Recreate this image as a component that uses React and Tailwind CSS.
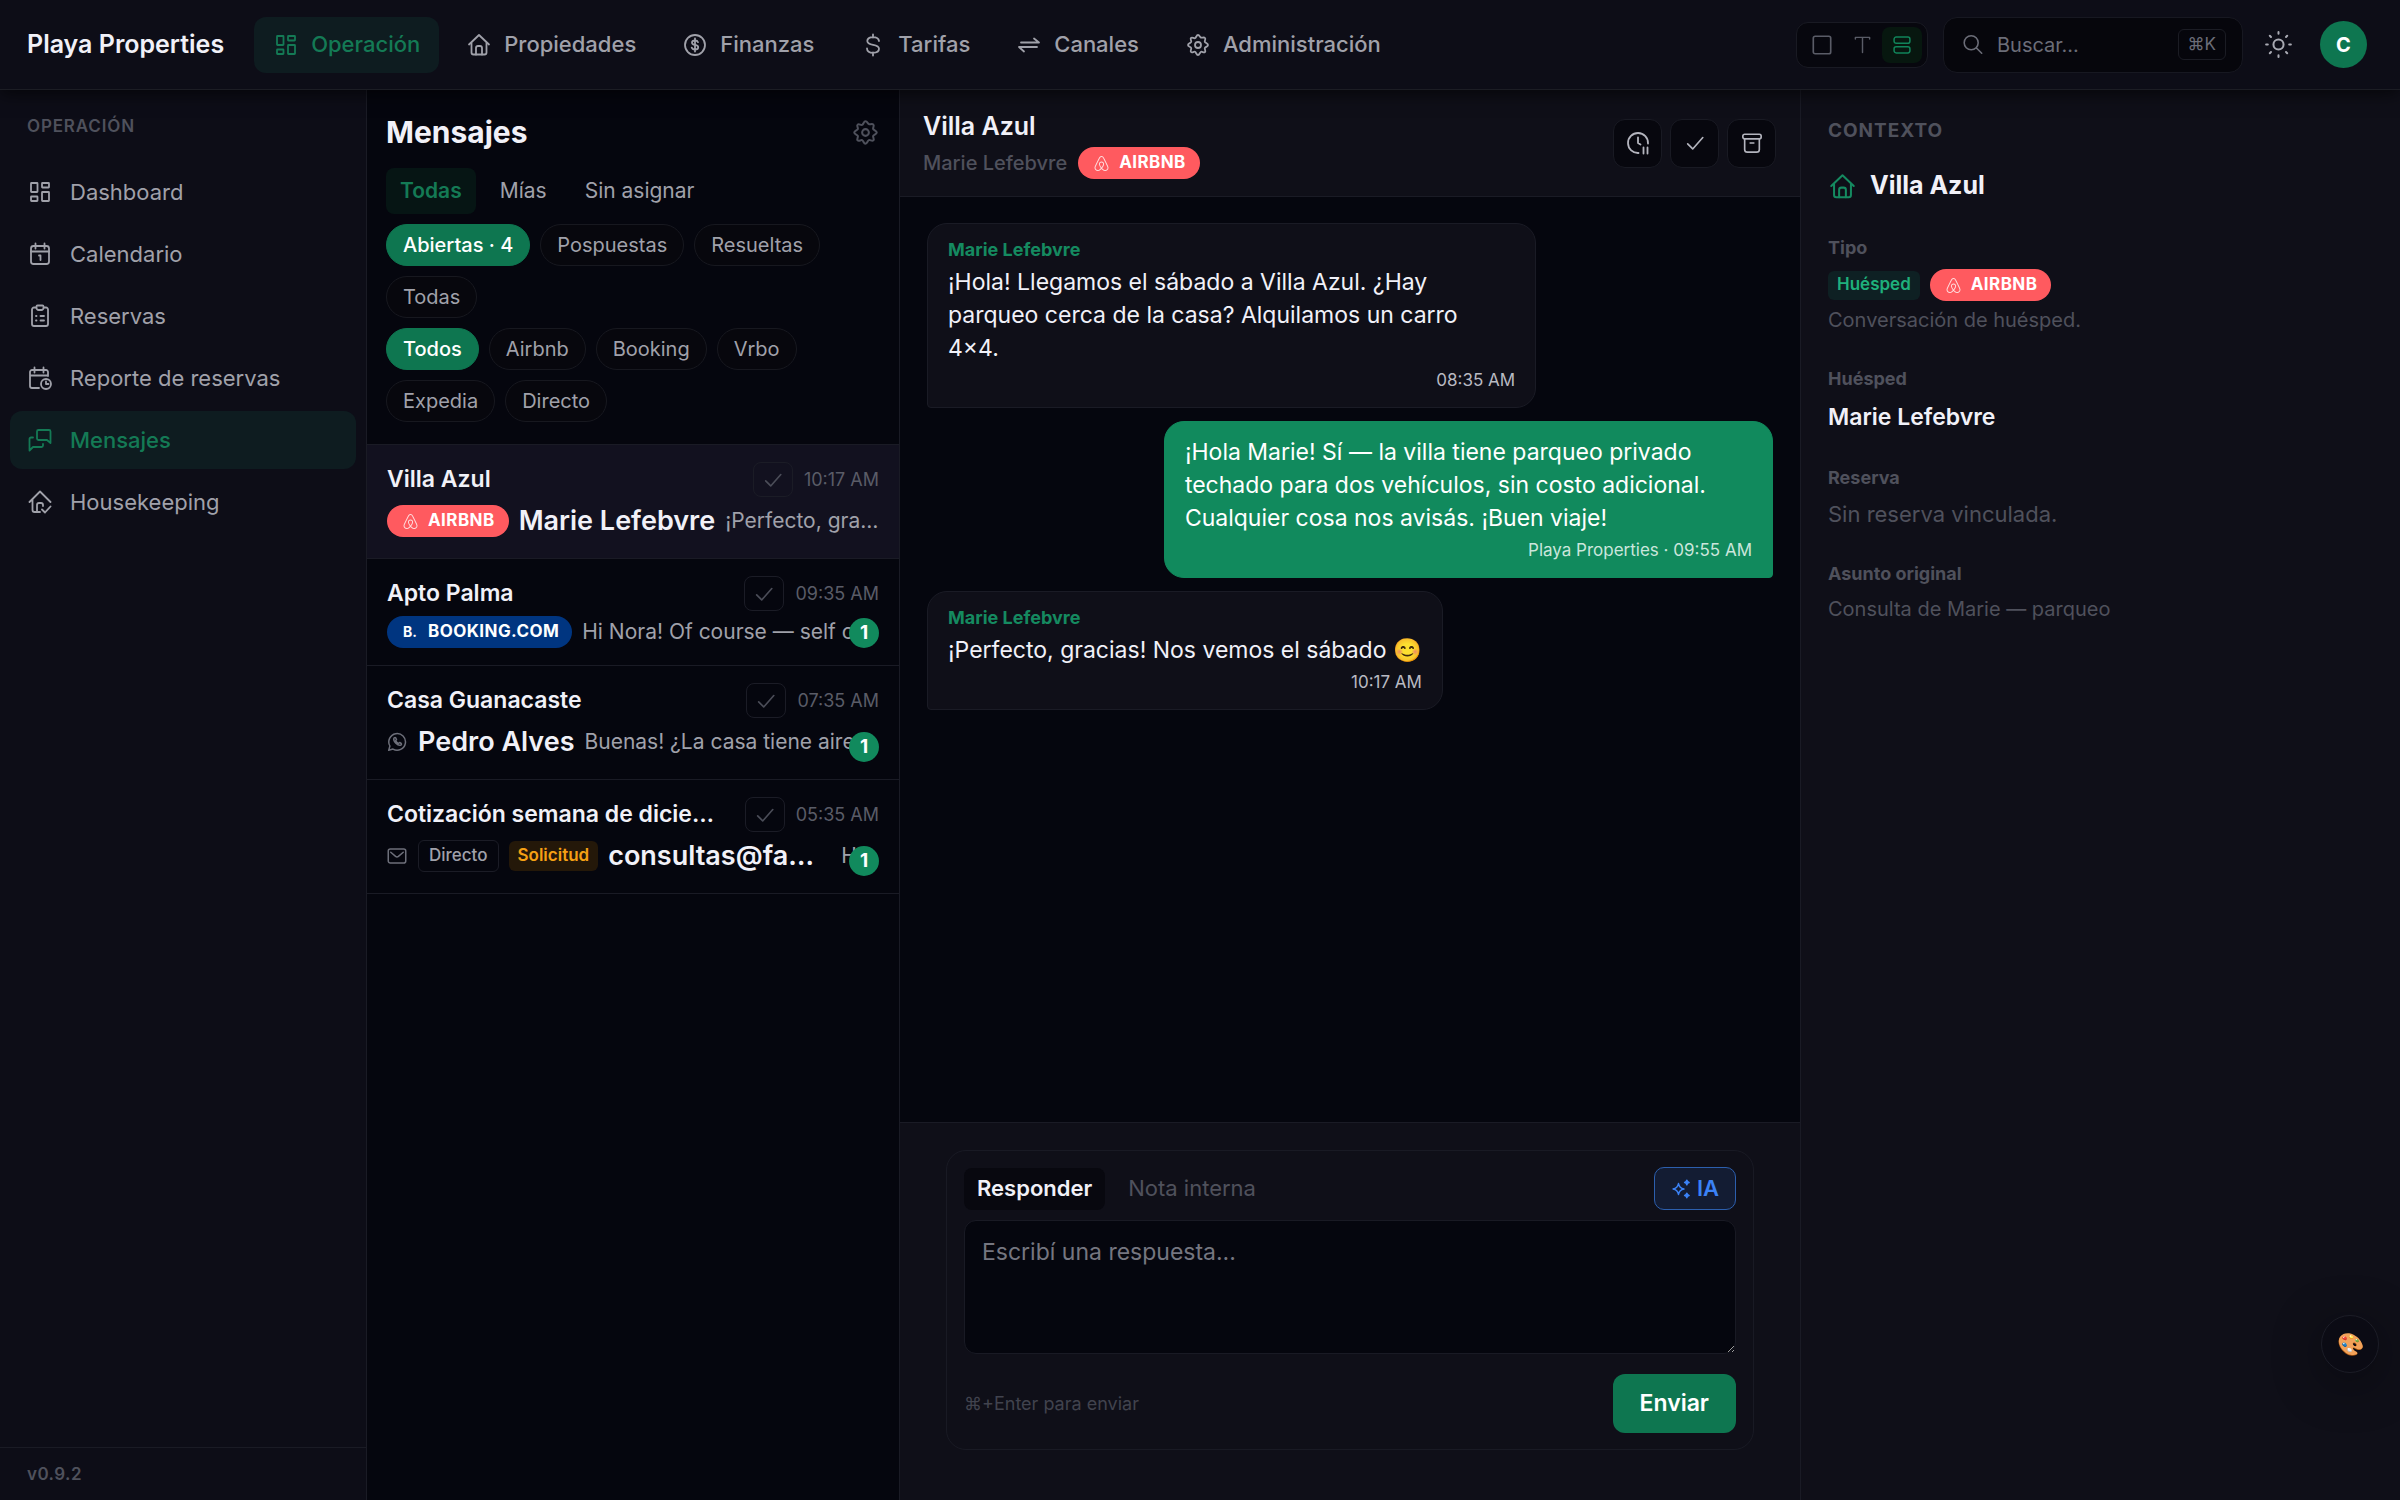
import { useState } from 'react';
import { SiAirbnb } from 'react-icons/si';

const ICONS = {
  dashboard: (
    <>
      <rect x="3" y="3" width="6.5" height="9" rx="0.5" />
      <rect x="14" y="3" width="7" height="4.5" rx="0.5" />
      <rect x="3" y="16.5" width="6.5" height="4.5" rx="0.5" />
      <rect x="14" y="12" width="7" height="9" rx="0.5" />
    </>
  ),
  home: (
    <>
      <path d="M2 11.500 12 2l10 9.500" />
      <path d="M4.500 10v9.500a2 2 0 0 0 2 2h11a2 2 0 0 0 2-2V10" />
      <path d="M9 21.500V15a2 2 0 0 1 2-2h2a2 2 0 0 1 2 2v6.500" />
    </>
  ),
  coin: (
    <>
      <circle cx="12" cy="12" r="10" />
      <path d="M15 9.200C14.600 8 13.500 7.500 12 7.500c-1.800 0-3 .8-3 2.200 0 3.200 6.200 1.400 6.200 4.500 0 1.500-1.300 2.300-3.200 2.300-1.700 0-2.900-.6-3.300-1.900M12 5.500v13" />
    </>
  ),
  dollar: <path d="M18 8c-.4-2.500-2.600-3.800-6-3.800S6.300 5.500 6.300 8c0 5.500 11.700 2.200 11.700 7.800 0 2.600-2.400 4-6 4s-6-1.500-6-4.300M12 1.500v3M12 19.500v3" />,
  swap: <path d="M4 9.500h18l-5-4M20 14H2l5 4.500" />,
  gear: (
    <>
      <path d="M12 2c1.600 0 1.900 2.100 3 2.600s2.900-.8 4 .4-.7 2.800-.2 3.900S22 10.400 22 12s-2.700 1.900-3.200 3 1.400 2.900.2 4-2.800-.7-4-.2S13.600 22 12 22s-1.900-2.700-3-3.200-2.900 1.400-4 .2.700-2.800.2-4S2 13.600 2 12s2.700-1.900 3.200-3S3.800 6.100 5 5s2.800.7 4 .2S10.400 2 12 2Z" />
      <circle cx="12" cy="12" r="3" />
    </>
  ),
  calendar: (
    <>
      <rect x="3" y="4" width="18" height="18" rx="2.5" />
      <path d="M3 9.500h18M7.500 1.500v5M16.500 1.500v5M11 13.500h1.500V18" />
    </>
  ),
  clipboard: (
    <>
      <path d="M8 3.500H6a2 2 0 0 0-2 2V20a2 2 0 0 0 2 2h12a2 2 0 0 0 2-2V5.500a2 2 0 0 0-2-2h-2" />
      <path d="M8.500 2.500c0-.6.500-1 1-1h5c.600 0 1 .4 1 1V4c0 1.100-.9 2-2 2h-3a2 2 0 0 1-2-2zM8 12h.5M12.500 12H16M8 16.500h.5M12.500 16.500H16" />
    </>
  ),
  report: (
    <>
      <path d="M20 10V6a2 2 0 0 0-2-2H4a2 2 0 0 0-2 2v14a2 2 0 0 0 2 2h7M2 9.500h18M6.500 1.500v5M15.500 1.500v5" />
      <circle cx="18" cy="18" r="5" />
      <path d="M18 15.500V18h2.500" />
    </>
  ),
  chats: (
    <>
      <path d="M10.500 2H21a1.500 1.500 0 0 1 1.500 1.500V15L19 12h-8.500A1.500 1.500 0 0 1 9 10.500v-7A1.500 1.500 0 0 1 10.500 2Z" />
      <path d="M5 9.500H3A1.500 1.500 0 0 0 1.500 11v11.500L5 19h8.500a1.500 1.500 0 0 0 1.500-1.500V16" />
    </>
  ),
  housekeeping: (
    <>
      <path d="M1.500 12 12 1.500 22.500 12M4.500 9.500V20a2 2 0 0 0 2 2H12" />
      <path d="M9 22v-7a2 2 0 0 1 2-2h2a2 2 0 0 1 2 2v1M14 19.500l3 3 5.500-6" />
    </>
  ),
  search: (
    <>
      <circle cx="10.500" cy="10" r="8" />
      <path d="m16.500 16 6 6" />
    </>
  ),
  sun: (
    <>
      <circle cx="12" cy="12" r="4.500" />
      <path d="M12 1v1.500M12 21.500V23M1 12h1.500M21.500 12H23M4.300 4.300l1 1M18.700 18.700l1 1M4.300 19.700l1-1M18.700 5.300l1-1" />
    </>
  ),
  check: <path d="m4 13 5.500 5.500L20.500 6" />,
  snooze: (
    <>
      <path d="M12.500 22A10 10 0 1 1 22 12.500M12 6.500V12l2.500 1.500" />
      <path d="M17.500 16.500v6M21.500 16.500v6" />
    </>
  ),
  archive: (
    <>
      <rect x="2" y="2.500" width="20" height="5" rx="2" />
      <path d="M4 7.500V19a3 3 0 0 0 3 3h10a3 3 0 0 0 3-3V7.500M10 12h4" />
    </>
  ),
  whatsapp: (
    <>
      <path d="M2 22l1.500-5.200A10 10 0 1 1 7.200 20.500Z" />
      <path d="M8.300 7.500c-1.200 3.600 4.600 9.500 8.300 8.200.8-.4 1-1.500.5-1.900l-1.900-1.200-1.400 1.200c-1.400-.5-2.800-2-3.400-3.500l1-1.300-1-2c-.5-.5-1.700-.3-2.100.5Z" />
    </>
  ),
  mail: (
    <>
      <rect x="1.500" y="3.500" width="21" height="17" rx="2.500" />
      <path d="m4.500 7.500 5.800 5a2.700 2.700 0 0 0 3.400 0l5.800-5" />
    </>
  ),
  sparkles: (
    <>
      <path d="M9 5.500c.8 4 2.500 5.700 6.500 6.500-4 .8-5.700 2.500-6.500 6.500-.8-4-2.500-5.700-6.500-6.500 4-.8 5.700-2.500 6.500-6.500Z" />
      <path d="M19 1.500c.3 1.700 1 2.400 2.700 2.700-1.700.3-2.400 1-2.700 2.700-.3-1.700-1-2.400-2.700-2.700 1.700-.3 2.400-1 2.700-2.700ZM19 17c.3 1.700 1 2.400 2.700 2.700-1.700.3-2.400 1-2.700 2.700-.3-1.700-1-2.400-2.700-2.700 1.700-.3 2.400-1 2.700-2.700Z" fill="currentColor" />
    </>
  ),
  square: <rect x="2.500" y="2.500" width="19" height="19" rx="2" />,
  letter: <path d="M3 5V3h18v2M12 3v19" />,
  rows: (
    <>
      <rect x="2.500" y="2.500" width="19" height="7.500" rx="2.500" />
      <rect x="2.500" y="14" width="19" height="7.500" rx="2.500" />
    </>
  ),
};

function Icon({ name, className = 'size-6' }) {
  return (
    <svg viewBox="0 0 24 24" fill="none" stroke="currentColor" strokeWidth="1.8" strokeLinecap="round" strokeLinejoin="round" className={`shrink-0 ${className}`} aria-hidden="true">
      {ICONS[name]}
    </svg>
  );
}

const NAV = [
  { label: 'Operación', icon: 'dashboard', active: true },
  { label: 'Propiedades', icon: 'home' },
  { label: 'Finanzas', icon: 'coin' },
  { label: 'Tarifas', icon: 'dollar' },
  { label: 'Canales', icon: 'swap' },
  { label: 'Administración', icon: 'gear' },
];

const SIDEBAR = [
  { label: 'Dashboard', icon: 'dashboard' },
  { label: 'Calendario', icon: 'calendar' },
  { label: 'Reservas', icon: 'clipboard' },
  { label: 'Reporte de reservas', icon: 'report' },
  { label: 'Mensajes', icon: 'chats', active: true },
  { label: 'Housekeeping', icon: 'housekeeping' },
];

const CONVERSATIONS = [
  { title: 'Villa Azul', time: '10:17 AM', channel: 'airbnb', name: 'Marie Lefebvre', preview: '¡Perfecto, gracias! Nos vemos el sábado 😊', selected: true },
  { title: 'Apto Palma', time: '09:35 AM', channel: 'booking', preview: 'Hi Nora! Of course — self check-in', unread: 1 },
  { title: 'Casa Guanacaste', time: '07:35 AM', channel: 'whatsapp', name: 'Pedro Alves', preview: 'Buenas! ¿La casa tiene aire acondicionado?', unread: 1 },
  { title: 'Cotización semana de diciembre', time: '05:35 AM', channel: 'mail', name: 'consultas@familiamora.com', preview: 'Hola', unread: 1 },
];

const MESSAGES = [
  { from: 'Marie Lefebvre', text: '¡Hola! Llegamos el sábado a Villa Azul. ¿Hay parqueo cerca de la casa? Alquilamos un carro\n4×4.', meta: '08:35 AM' },
  { own: true, text: '¡Hola Marie! Sí — la villa tiene parqueo privado techado para dos vehículos, sin costo adicional. Cualquier cosa nos avisás. ¡Buen viaje!', meta: 'Playa Properties · 09:55 AM' },
  { from: 'Marie Lefebvre', text: '¡Perfecto, gracias! Nos vemos el sábado 😊', meta: '10:17 AM' },
];

function AirbnbPill() {
  return (
    <span className="flex h-8 shrink-0 items-center gap-[10px] rounded-full bg-[#ff5a5f] pr-[14px] pl-4 text-[17px] font-bold tracking-wide text-white">
      <SiAirbnb className="size-[15px] opacity-80" aria-hidden="true" />
      AIRBNB
    </span>
  );
}

function BookingPill() {
  return (
    <span className="flex h-8 shrink-0 items-center gap-[11px] rounded-full bg-[#003580] pr-[13px] pl-4 text-[17px] font-bold tracking-wide text-white">
      <span className="text-[14px] tracking-normal">B.</span>
      BOOKING.COM
    </span>
  );
}

function Pills({ items, value, onChange }) {
  return (
    <div className="flex flex-wrap gap-[10px]">
      {items.map((item) => (
        <button
          key={item}
          type="button"
          onClick={() => onChange(item)}
          className={`h-[42px] rounded-full border px-4 text-[20px] ${item === value ? 'border-[#0e7650] bg-[#0e7650] font-medium text-white' : 'border-[#17181f] bg-[#07070d] text-[#a0a1aa]'}`}
        >
          {item}
        </button>
      ))}
    </div>
  );
}

function Conversation({ item }) {
  return (
    <li className={`relative border-b border-[#1a1b25] px-5 pt-[17px] pb-4 ${item.selected ? 'bg-[#12111f]' : ''}`}>
      <div className="flex h-[35px] items-center gap-[11px]">
        <a href="#" className="min-w-0 flex-1 truncate text-[23px] font-semibold">{item.title}</a>
        <button type="button" aria-label="Resolver" className="flex h-[35px] w-10 items-center justify-center rounded-lg border border-[#1b1c26] text-[#4b4d58]">
          <Icon name="check" className="size-[22px]" />
        </button>
        <time className="text-[18px] text-[#5a5c67]">{item.time}</time>
      </div>
      <div className={`mt-[3px] flex items-center gap-[10px] overflow-hidden ${item.name ? 'h-[42px]' : 'h-[35px]'}`}>
        {item.channel === 'airbnb' && <AirbnbPill />}
        {item.channel === 'booking' && <BookingPill />}
        {item.channel === 'whatsapp' && <Icon name="whatsapp" className="mr-px size-5 text-[#6d6f7a]" />}
        {item.channel === 'mail' && (
          <>
            <Icon name="mail" className="mr-px size-5 text-[#6d6f7a]" />
            <span className="flex h-8 shrink-0 items-center rounded-md border border-[#1b1c26] px-[10px] text-[17px] font-medium text-[#a0a1aa]">Directo</span>
            <span className="flex h-[30px] shrink-0 items-center rounded-md bg-[#241809] px-[9px] text-[17px] font-semibold text-[#f5a014]">Solicitud</span>
          </>
        )}
        {item.name && <span className="max-w-[223px] shrink-0 truncate text-[27px] font-semibold">{item.name}</span>}
        <span className="min-w-0 flex-1 truncate text-[21px] text-[#a0a1aa]">{item.preview}</span>
      </div>
      {item.unread && (
        <span className="absolute right-5 bottom-[17px] flex size-[30px] items-center justify-center rounded-full bg-[#118a5d] text-[19px] font-bold text-white">{item.unread}</span>
      )}
    </li>
  );
}

function Message({ message }) {
  return (
    <article
      className={`max-w-[72%] rounded-[20px] border px-5 py-3 ${message.own ? 'self-end rounded-br-[4px] border-[#118a5d] bg-[#118a5d] text-white' : 'self-start rounded-bl-[4px] border-[#1a1b25] bg-[#0f0f18]'}`}
    >
      {message.from && <h3 className="text-[18px] leading-[28px] font-bold text-[#158a60]">{message.from}</h3>}
      <p className="mt-[2px] text-[23px] leading-[33px] whitespace-pre-line">{message.text}</p>
      <p className={`text-right text-[17px] leading-[30px] ${message.own ? 'text-[#cbe6dc]' : 'text-[#b9bac2]'}`}>{message.meta}</p>
    </article>
  );
}

function ContextSection({ label, children }) {
  return (
    <section>
      <h3 className="text-[18px] leading-[26px] font-bold text-[#4f515c]">{label}</h3>
      {children}
    </section>
  );
}

export default function App() {
  const [tab, setTab] = useState('Todas');
  const [status, setStatus] = useState('Abiertas · 4');
  const [channel, setChannel] = useState('Todos');
  const [reply, setReply] = useState('');

  return (
    <div className="flex h-screen flex-col bg-[#05060e] font-['Inter',sans-serif] text-[#f1f1f8]">
      {/* TOP BAR */}
      <header className="relative z-10 flex h-[90px] shrink-0 items-center border-b border-[#1c1d24] bg-[#0d0d17] pr-[33px] pl-[27px] shadow-[0_4px_16px_rgba(0,0,0,0.6)]">
        <span className="mr-[30px] text-[25px] font-semibold whitespace-nowrap">Playa Properties</span>
        <nav className="flex gap-2">
          {NAV.map((item) => (
            <a
              key={item.label}
              href="#"
              className={`flex h-14 items-center gap-[13px] rounded-xl pr-[19px] pl-5 text-[22px] font-medium ${item.active ? 'bg-[#0e1c20] text-[#147a55]' : 'text-[#a0a1aa]'}`}
            >
              <Icon name={item.icon} />
              {item.label}
            </a>
          ))}
        </nav>
        <div className="ml-auto flex items-center">
          <div className="mr-[15px] flex h-[46px] items-center rounded-xl border border-[#191a23] bg-[#07070e] px-[5px] text-[#5a5c67]">
            <button type="button" aria-label="Compacto" className="flex h-9 w-10 items-center justify-center"><Icon name="square" className="size-[22px]" /></button>
            <button type="button" aria-label="Texto" className="flex h-9 w-10 items-center justify-center"><Icon name="letter" className="size-[19px]" /></button>
            <button type="button" aria-label="Filas" className="flex h-9 w-10 items-center justify-center rounded-lg bg-[#07170f] text-[#11845a]"><Icon name="rows" className="size-5" /></button>
          </div>
          <div className="mr-[22px] flex h-14 w-[300px] items-center rounded-[14px] border border-[#171821] bg-[#06060c] pr-4 pl-[18px] text-[#6b6d78]">
            <Icon name="search" className="size-[21px]" />
            <input type="search" aria-label="Buscar" placeholder="Buscar..." className="ml-[14px] w-0 flex-1 bg-transparent text-[20px] outline-none placeholder:text-[#6b6d78]" />
            <kbd className="flex h-[31px] items-center rounded-md border border-[#1b1c24] px-[9px] font-['Inter',sans-serif] text-[17px]">⌘K</kbd>
          </div>
          <button type="button" aria-label="Cambiar tema" className="mr-7 text-[#a9aab3]"><Icon name="sun" className="size-[27px]" /></button>
          <button type="button" className="size-[47px] rounded-full bg-[#0e7650] text-[20px] font-bold text-white">C</button>
        </div>
      </header>

      <div className="flex min-h-0 flex-1">
        {/* SIDEBAR */}
        <aside className="flex w-[367px] shrink-0 flex-col border-r border-[#1a1b25] bg-[#0d0d17]">
          <h2 className="px-[27px] pt-[23px] text-[17px] leading-[26px] font-semibold tracking-wider text-[#4f515c]">OPERACIÓN</h2>
          <nav className="mt-6 flex flex-col gap-1 px-[10px]">
            {SIDEBAR.map((item) => (
              <a
                key={item.label}
                href="#"
                className={`flex h-[58px] items-center gap-[18px] rounded-xl px-[18px] text-[22px] ${item.active ? 'bg-[#0e1c20] font-medium text-[#147a55]' : 'text-[#a0a1aa]'}`}
              >
                <Icon name={item.icon} />
                {item.label}
              </a>
            ))}
          </nav>
          <p className="mt-auto border-t border-[#1a1b25] px-[27px] py-3 text-[17px] leading-[28px] font-semibold tracking-wide text-[#4f515c]">v0.9.2</p>
        </aside>

        {/* CONVERSATION LIST */}
        <section className="w-[533px] shrink-0 overflow-hidden border-r border-[#1a1b25]">
          <div className="border-b border-[#1a1b25] px-[19px] pt-5 pb-[22px]">
            <div className="flex h-11 items-center justify-between">
              <h1 className="text-[30px] font-bold">Mensajes</h1>
              <button type="button" aria-label="Ajustes" className="mr-px text-[#4f515c]"><Icon name="gear" className="size-[27px]" /></button>
            </div>
            <div className="mt-[14px] mb-[10px] flex gap-[10px]">
              {['Todas', 'Mías', 'Sin asignar'].map((label) => (
                <button
                  key={label}
                  type="button"
                  onClick={() => setTab(label)}
                  className={`h-[46px] rounded-lg px-[14px] text-[21px] ${tab === label ? 'bg-[#061514] font-semibold text-[#147a55]' : 'text-[#a0a1aa]'}`}
                >
                  {label}
                </button>
              ))}
            </div>
            <div className="space-y-[10px]">
              <Pills items={['Abiertas · 4', 'Pospuestas', 'Resueltas', 'Todas']} value={status} onChange={setStatus} />
              <Pills items={['Todos', 'Airbnb', 'Booking', 'Vrbo', 'Expedia', 'Directo']} value={channel} onChange={setChannel} />
            </div>
          </div>
          <ul>
            {CONVERSATIONS.map((item) => (
              <Conversation key={item.title} item={item} />
            ))}
          </ul>
        </section>

        {/* THREAD */}
        <main className="flex min-w-0 flex-1 flex-col">
          <div className="flex h-[107px] shrink-0 items-center justify-between border-b border-[#1a1b25] bg-[#0f0f18] pr-6 pl-[23px]">
            <div>
              <h2 className="text-[25px] leading-[38px] font-semibold">Villa Azul</h2>
              <div className="mt-[2px] flex items-center gap-[11px]">
                <span className="text-[20px] font-medium text-[#4f515c]">Marie Lefebvre</span>
                <AirbnbPill />
              </div>
            </div>
            <div className="flex gap-2 text-[#b4b5be]">
              <button type="button" aria-label="Posponer" className="flex size-[49px] items-center justify-center rounded-xl border border-[#191a23] bg-[#07070e]"><Icon name="snooze" /></button>
              <button type="button" aria-label="Resolver" className="flex size-[49px] items-center justify-center rounded-xl border border-[#191a23] bg-[#07070e]"><Icon name="check" className="size-[22px]" /></button>
              <button type="button" aria-label="Archivar" className="flex size-[49px] items-center justify-center rounded-xl border border-[#191a23] bg-[#07070e]"><Icon name="archive" className="size-[22px]" /></button>
            </div>
          </div>

          <div className="flex flex-1 flex-col gap-[13px] overflow-hidden px-[27px] pt-[26px]">
            {MESSAGES.map((message) => (
              <Message key={message.meta} message={message} />
            ))}
          </div>

          <div className="border-t border-[#1a1b25] bg-[#0f0f18] px-[27px] pt-[27px] pb-[50px]">
            <form className="mx-auto max-w-[808px] rounded-[20px] border border-[#191a24] px-[17px] py-4" onSubmit={(e) => e.preventDefault()}>
              <div className="flex items-center">
                <button type="button" className="h-[42px] rounded-lg bg-[#08080f] px-[13px] text-[22px] font-semibold">Responder</button>
                <button type="button" className="ml-[10px] h-[42px] px-[13px] text-[22px] text-[#4f515c]">Nota interna</button>
                <button type="button" className="ml-auto flex h-[43px] items-center gap-[6px] rounded-[10px] border border-[#2c5fae] bg-[#131c33] px-4 text-[22px] font-semibold text-[#3b82f6]">
                  <Icon name="sparkles" className="size-5" />
                  IA
                </button>
              </div>
              <textarea
                aria-label="Respuesta"
                value={reply}
                onChange={(e) => setReply(e.target.value)}
                placeholder="Escribí una respuesta..."
                className="mt-[10px] block h-[134px] w-full resize-y rounded-xl border border-[#191a24] bg-[#05060e] px-[17px] py-[14px] text-[23px] leading-[34px] outline-none scheme-dark placeholder:text-[#757680]"
              />
              <div className="mt-5 flex items-center justify-between">
                <span className="text-[18px] text-[#41434e]">⌘+Enter para enviar</span>
                <button type="submit" className="h-[59px] rounded-xl bg-[#0e7650] px-[27px] text-[23px] font-semibold text-white">Enviar</button>
              </div>
            </form>
          </div>
        </main>

        {/* CONTEXT */}
        <aside className="w-[600px] shrink-0 border-l border-[#1a1b25] bg-[#0f0f18] px-[27px] pt-[27px]">
          <h2 className="text-[19px] leading-[28px] font-bold tracking-wider text-[#4f515c]">CONTEXTO</h2>
          <div className="mt-[21px] flex h-10 items-center gap-[14px]">
            <Icon name="home" className="ml-px size-[27px] text-[#158a60]" />
            <span className="text-[25px] font-bold">Villa Azul</span>
          </div>
          <div className="mt-[29px] space-y-[31px]">
            <ContextSection label="Tipo">
              <div className="mt-2 flex items-center gap-[10px]">
                <span className="flex h-[29px] items-center rounded-md bg-[#0e2023] px-[9px] text-[17px] font-semibold text-[#1fb07c]">Huésped</span>
                <AirbnbPill />
              </div>
              <p className="mt-[5px] text-[20px] leading-[29px] text-[#4f515c]">Conversación de huésped.</p>
            </ContextSection>
            <ContextSection label="Huésped">
              <p className="mt-2 text-[23px] leading-[34px] font-semibold">Marie Lefebvre</p>
            </ContextSection>
            <ContextSection label="Reserva">
              <p className="mt-[7px] text-[22px] leading-[32px] text-[#4f515c]">Sin reserva vinculada.</p>
            </ContextSection>
            <ContextSection label="Asunto original">
              <p className="mt-2 text-[20px] leading-[29px] text-[#4f515c]">Consulta de Marie — parqueo</p>
            </ContextSection>
          </div>
        </aside>
      </div>

      <button type="button" aria-label="Tema" className="fixed right-[21px] bottom-[127px] size-[58px] rounded-full border border-[#1c1d27] bg-[#0b0b14] text-[22px] shadow-[0_10px_50px_rgba(0,0,0,0.4)]">🎨</button>
    </div>
  );
}
